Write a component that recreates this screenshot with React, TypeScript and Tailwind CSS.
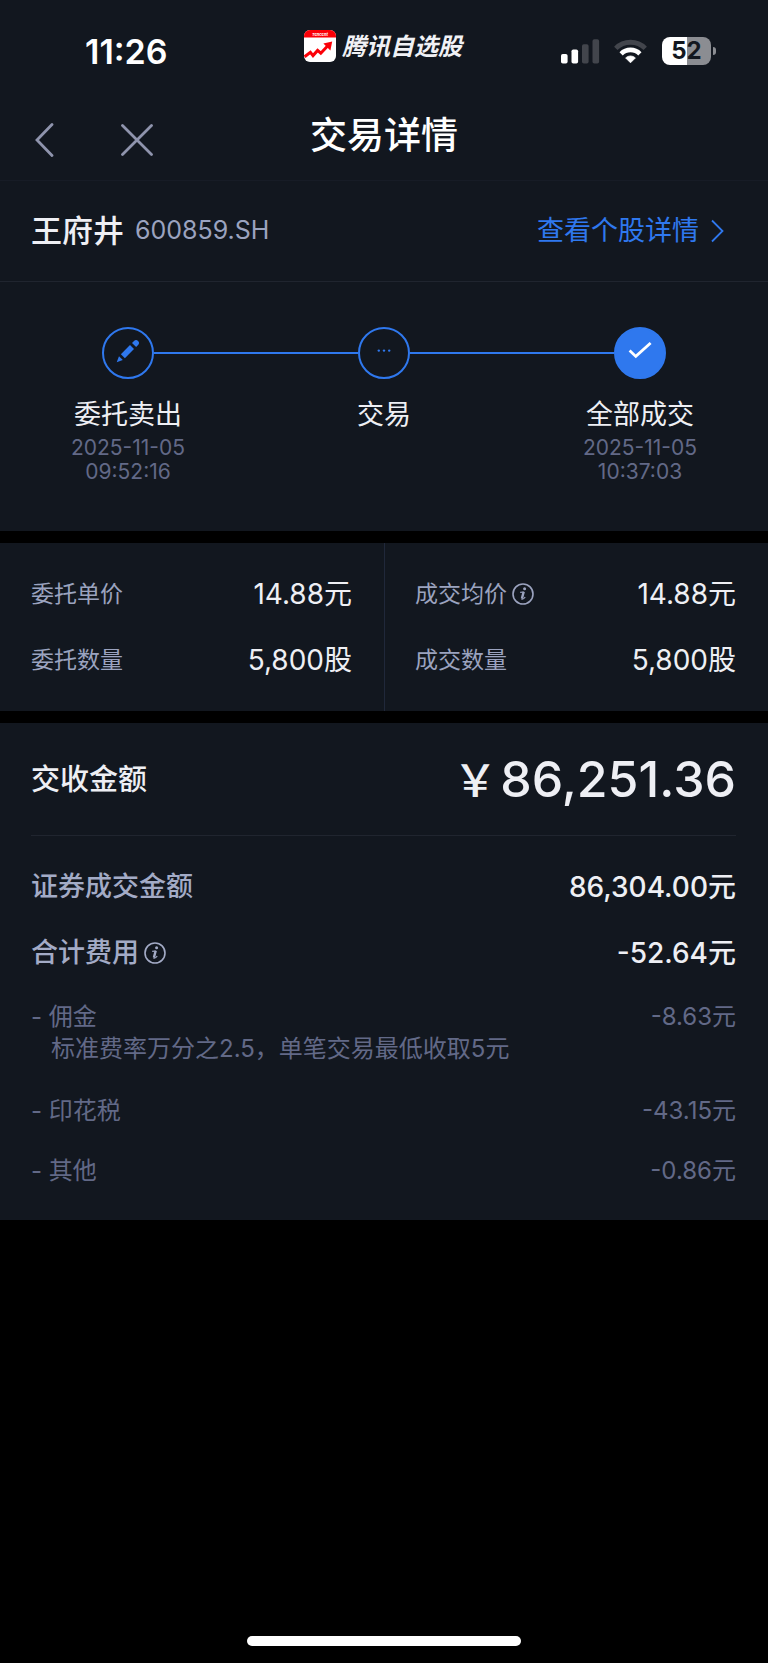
interface Step {
  title: string;
  date?: string;
  time?: string;
  icon: React.ReactNode;
  done?: boolean;
}

interface Fee {
  name: string;
  value: string;
  note?: string;
}

const steps: Step[] = [
  { title: "委托卖出", date: "2025-11-05", time: "09:52:16", icon: <PencilIcon /> },
  { title: "交易", icon: <DotsIcon /> },
  { title: "全部成交", date: "2025-11-05", time: "10:37:03", icon: <CheckIcon />, done: true },
];

const fees: Fee[] = [
  { name: "佣金", value: "-8.63元", note: "标准费率万分之2.5，单笔交易最低收取5元" },
  { name: "印花税", value: "-43.15元" },
  { name: "其他", value: "-0.86元" },
];

function PencilIcon() {
  return (
    <svg viewBox="0 0 24 24" className="h-6 w-6 fill-[#2f78ee]" aria-hidden="true">
      <path d="M0.7 23.3 L3 17.2 L6.8 21 Z" />
      <path d="M4.9 15.2 L14 6 L18 10 L8.9 19.2 Z" />
      <path d="M16 4 L18 2 A2.9 2.9 0 0 1 22.1 6.1 L20.1 8.1 Z" />
    </svg>
  );
}

function DotsIcon() {
  return (
    <svg viewBox="0 0 24 24" className="h-6 w-6 fill-[#2f78ee]" aria-hidden="true">
      <circle cx="6.8" cy="11.6" r="1.2" />
      <circle cx="12" cy="11.6" r="1.2" />
      <circle cx="17.2" cy="11.6" r="1.2" />
    </svg>
  );
}

function CheckIcon() {
  return (
    <svg viewBox="0 0 24 24" className="h-6 w-6 fill-none stroke-white" strokeWidth="2.8" aria-hidden="true">
      <path d="M1.6 11.6 L7.8 17.4 L22.6 4" strokeLinejoin="miter" />
    </svg>
  );
}

function InfoButton({ label }: { label: string }) {
  return (
    <button type="button" aria-label={label} className="ml-[5px] shrink-0">
      <svg viewBox="0 0 22 22" className="h-[22px] w-[22px] fill-none stroke-current" aria-hidden="true">
        <circle cx="11" cy="11" r="10" strokeWidth="1.6" />
        <circle cx="12.6" cy="5.8" r="1.5" className="fill-current stroke-none" />
        <path d="M8.2 9.4 L11.8 9" strokeWidth="1.2" />
        <path d="M11.7 8.8 L9.9 15.6" strokeWidth="2.4" />
        <path d="M9.4 16 Q11.4 16.8 13.2 14" strokeWidth="1.2" />
      </svg>
    </button>
  );
}

function AppLogo() {
  return (
    <svg viewBox="0 0 32 32" className="h-8 w-8" aria-hidden="true">
      <rect width="32" height="32" rx="6" fill="#fff" />
      <path d="M0 7.6 V6 A6 6 0 0 1 6 0 H26 A6 6 0 0 1 32 6 V7.6 Z" fill="#fb0007" />
      <text x="16" y="5.6" textAnchor="middle" fontSize="4" fontStyle="italic" fontWeight="700" fill="#fff">
        Tencent
      </text>
      <path d="M0.6 26.8 L6.4 22.4 L9 25.6 L13.6 20.4 L16.8 23.2 L23.6 16" fill="none" stroke="#fb0007" strokeWidth="3" />
      <path d="M19.4 13.4 L28.2 11.4 L26.4 20.4 Z" fill="#fb0007" />
    </svg>
  );
}

function StatusBar() {
  return (
    <div className="grid h-[92px] grid-cols-[1fr_auto_1fr] items-center">
      <span className="pt-3 pl-[85px] text-[34px] leading-10 font-semibold text-white">11:26</span>
      <div className="flex items-center gap-1.5 pr-0.5">
        <AppLogo />
        <span className="pt-0.5 text-2xl font-bold text-[#f0f1f5] italic">腾讯自选股</span>
      </div>
      <div className="flex items-center justify-end pt-[10px] pr-[52px]">
        <svg viewBox="0 0 39 25" className="h-[25px] w-[39px]" aria-label="信号">
          <rect x="0" y="15" width="6.6" height="9.6" rx="1.8" fill="#fff" />
          <rect x="10.5" y="10.4" width="6.6" height="14.2" rx="1.8" fill="#fff" />
          <rect x="21" y="5.2" width="6.6" height="19.4" rx="1.8" fill="#42454c" />
          <rect x="31.5" y="0.2" width="6.6" height="24.4" rx="1.8" fill="#42454c" />
        </svg>
        <svg viewBox="0 0 33 25" className="ml-[14px] h-[25px] w-[33px] fill-none" aria-label="无线网络">
          <path d="M1.8 9.4 A20.7 20.7 0 0 1 31.2 9.4" stroke="#42454c" strokeWidth="4.8" />
          <path d="M7.1 14.8 A13.3 13.3 0 0 1 25.9 14.8" stroke="#fff" strokeWidth="4.6" />
          <path d="M16.5 23.8 L11.6 18.9 A7.2 7.2 0 0 1 21.4 18.9 Z" fill="#fff" stroke="#fff" strokeWidth="0.8" strokeLinejoin="round" />
        </svg>
        <span className="ml-[15px] flex h-7 w-[49px] items-center justify-center rounded-lg bg-[linear-gradient(90deg,#fff_52%,#8b8d92_52%)] text-2xl leading-7 font-bold text-[#12171f]">
          52
        </span>
        <span className="ml-0.5 h-2 w-[3px] rounded-r-full bg-[#8b8d92]" />
      </div>
    </div>
  );
}

function NavBar() {
  return (
    <header className="grid h-[89px] grid-cols-[1fr_auto_1fr] items-center border-b border-[#171c26]">
      <div className="flex items-center gap-[66px] pt-2 pl-[35px] text-[#8f94ad]">
        <button type="button" aria-label="返回">
          <svg viewBox="0 0 20 34" className="h-[34px] w-5 fill-none stroke-current" strokeWidth="2.8" strokeLinecap="round">
            <path d="M17 1.5 L2 17 L17 32.5" />
          </svg>
        </button>
        <button type="button" aria-label="关闭">
          <svg viewBox="0 0 32 32" className="h-8 w-8 fill-none stroke-current" strokeWidth="2.8" strokeLinecap="round">
            <path d="M1.5 1.5 L30.5 30.5 M30.5 1.5 L1.5 30.5" />
          </svg>
        </button>
      </div>
      <h1 className="text-[37px] leading-[48px] font-medium text-white">交易详情</h1>
    </header>
  );
}

function StepItem({ step, first, last }: { step: Step; first: boolean; last: boolean }) {
  return (
    <li className="text-center">
      <div className="flex items-center">
        <span className={`h-0.5 flex-1 ${first ? "" : "bg-[#2f78ee]"}`} />
        <span
          className={`flex h-[52px] w-[52px] items-center justify-center rounded-full border-2 border-[#2f78ee] pb-1 ${
            step.done ? "bg-[#2f78ee]" : ""
          }`}
        >
          {step.icon}
        </span>
        <span className={`h-0.5 flex-1 ${last ? "" : "bg-[#2f78ee]"}`} />
      </div>
      <p className="mt-[18px] text-[27px] leading-9">{step.title}</p>
      {step.date && (
        <p className="mt-[3px] text-[21px] leading-6 text-[#626987]">
          {step.date}
          <br />
          {step.time}
        </p>
      )}
    </li>
  );
}

function PriceRow({ label, value, info }: { label: string; value: string; info?: boolean }) {
  return (
    <div className="flex items-center justify-between leading-9">
      <dt className="flex items-center text-[23px] text-[#9ba3bf]">
        {label}
        {info && <InfoButton label={`${label}说明`} />}
      </dt>
      <dd className="text-[28px]">{value}</dd>
    </div>
  );
}

function TotalRow({ label, value, info }: { label: string; value: string; info?: boolean }) {
  return (
    <div className="flex items-center justify-between leading-9 font-medium">
      <dt className="flex items-center text-[27px] text-[#a3abc6]">
        {label}
        {info && <InfoButton label={`${label}说明`} />}
      </dt>
      <dd className="text-[28px]">{value}</dd>
    </div>
  );
}

export default function App() {
  return (
    <div className="flex min-h-screen flex-col gap-3 bg-black font-['Inter','Noto_Sans_CJK_SC',sans-serif] text-[#eeeff4]">
      <div className="bg-[#12171f]">
        <StatusBar />
        <NavBar />

        {/* Stock name and link to its quote page */}
        <div className="flex h-[101px] items-center justify-between border-b border-[#20252f] pr-[44px] pl-[31px]">
          <div className="flex items-center gap-[11px]">
            <h2 className="text-[31px] font-medium">王府井</h2>
            <span className="text-[25px] text-[#9ba3bf]">600859.SH</span>
          </div>
          <a href="#quote" className="flex items-center gap-3 text-[27px] text-[#2f78ee]">
            查看个股详情
            <svg viewBox="0 0 13 24" className="h-6 w-[13px] fill-none stroke-current" strokeWidth="1.8" aria-hidden="true">
              <path d="M1 1.5 L11.5 12 L1 22.5" />
            </svg>
          </a>
        </div>

        {/* Order progress */}
        <ol className="grid grid-cols-3 pt-[45px] pb-[47px]">
          {steps.map((step, i) => (
            <StepItem key={step.title} step={step} first={i === 0} last={i === steps.length - 1} />
          ))}
        </ol>
      </div>

      <section className="grid grid-cols-2 bg-[#12171f]">
        <dl className="space-y-[30px] py-[33px] pr-8 pl-[31px]">
          <PriceRow label="委托单价" value="14.88元" />
          <PriceRow label="委托数量" value="5,800股" />
        </dl>
        <dl className="space-y-[30px] border-l border-[#20283a] py-[33px] pr-8 pl-[30px]">
          <PriceRow label="成交均价" value="14.88元" info />
          <PriceRow label="成交数量" value="5,800股" />
        </dl>
      </section>

      {/* Settlement amount and fee breakdown */}
      <section className="bg-[#12171f] pr-8 pb-[33px] pl-[31px]">
        <div className="flex h-[113px] items-center justify-between border-b border-[#20252f] pt-0.5">
          <h2 className="text-[29px] font-medium">交收金额</h2>
          <p className="flex items-baseline gap-[3px] text-[50px] leading-[60px] font-medium">
            <span className="text-[44px]">￥</span>
            86,251.36
          </p>
        </div>
        <dl className="space-y-[30px] pt-[33px]">
          <TotalRow label="证券成交金额" value="86,304.00元" />
          <TotalRow label="合计费用" value="-52.64元" info />
        </dl>
        <dl className="space-y-7 pt-[30px] text-2xl leading-8 text-[#626987]">
          {fees.map((fee) => (
            <div key={fee.name} className="grid grid-cols-[auto_1fr]">
              <dt>- {fee.name}</dt>
              <dd className="text-right">{fee.value}</dd>
              {fee.note && <dd className="col-span-2 pb-0.5 pl-5">{fee.note}</dd>}
            </div>
          ))}
        </dl>
      </section>

      <div className="mt-auto flex justify-center pb-[17px]">
        <span className="h-[10px] w-[274px] rounded-full bg-white" />
      </div>
    </div>
  );
}
